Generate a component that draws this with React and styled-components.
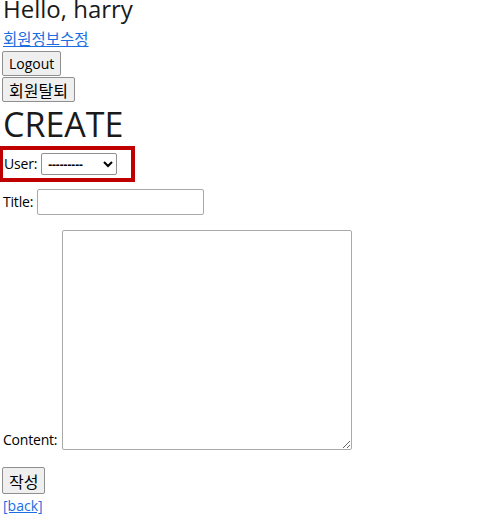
import React from 'react';
import styled, { createGlobalStyle } from 'styled-components';

const GlobalStyle = createGlobalStyle`
  html, body {
    margin: 0;
    padding: 0;
    background: #ffffff;
  }
  body {
    font-family: "Open Sans", "Noto Sans CJK KR", sans-serif;
    color: #000000;
    font-size: 14px;
  }
`;

const Page = styled.div`
  display: flex;
  flex-direction: column;
  align-items: flex-start;
  padding: 0 0 0 3px;
  overflow: hidden;
  height: 522px;
`;

const Greeting = styled.h2`
  margin: -7px 0 0;
  font-size: 24px;
  font-weight: 400;
  line-height: 32px;
  color: #1a1a1a;
`;

const Link = styled.a`
  color: #1a6ee0;
  text-decoration: underline;
  font-size: ${({ $size }) => $size || 14}px;
  line-height: ${({ $lh }) => $lh || 18}px;
  margin-top: ${({ $top }) => $top || 0}px;
`;

const Button = styled.button`
  font-family: "Open Sans", "Noto Sans CJK KR", sans-serif;
  font-size: ${({ $size }) => $size || 14}px;
  height: ${({ $h }) => $h || 25}px;
  padding: 0 6px;
  margin: ${({ $top }) => $top || 0}px 0 0 -1px;
  background: #efefef;
  border: 1px solid #8f8f8f;
  border-radius: 2px;
  color: #000;
`;

const Heading = styled.h1`
  margin: 1px 0 0;
  font-size: 34px;
  font-weight: 400;
  line-height: 42px;
  color: #1a1a1a;
`;

const Highlight = styled.div`
  display: flex;
  align-items: center;
  gap: 4px;
  margin: 1px 0 0 -4px;
  padding: 0 14px 0 1px;
  height: 28px;
  border: 4px solid #c00000;
`;

const Row = styled.div`
  display: flex;
  align-items: ${({ $end }) => ($end ? 'flex-end' : 'center')};
  gap: ${({ $gap }) => $gap || 4}px;
  margin-top: ${({ $top }) => $top || 0}px;
`;

const Label = styled.label`
  font-size: 14px;
  line-height: 16px;
  letter-spacing: -0.2px;
  margin-bottom: ${({ $bottom }) => $bottom || 0}px;
`;

const Select = styled.select`
  font-family: "Open Sans", sans-serif;
  font-size: 12px;
  font-weight: 700;
  height: 22px;
  width: 76px;
  border: 1px solid #8f8f8f;
  border-radius: 2px;
  background: #fff;
  color: #000;
  padding: 0 2px;
`;

const Input = styled.input`
  width: 167px;
  height: 26px;
  box-sizing: border-box;
  border: 1px solid #a9a9a9;
  border-radius: 2px;
  padding: 1px 2px;
`;

const TextArea = styled.textarea`
  width: 290px;
  height: 220px;
  box-sizing: border-box;
  border: 1px solid #a9a9a9;
  border-radius: 2px;
  display: block;
`;

export default function App() {
  return (
    <>
      <GlobalStyle />
      <Page>
        <Greeting>Hello, harry</Greeting>
        <Link href="#" $top={5} $size={15.5}>회원정보수정</Link>
        <Button $top={3}>Logout</Button>
        <Button $top={1} $size={16}>회원탈퇴</Button>
        <Heading>CREATE</Heading>
        <Highlight>
          <Label>User:</Label>
          <Select defaultValue="">
            <option value="">---------</option>
          </Select>
        </Highlight>
        <Row $top={7}>
          <Label>Title:</Label>
          <Input type="text" />
        </Row>
        <Row $top={15} $gap={5} $end>
          <Label $bottom={2}>Content:</Label>
          <TextArea />
        </Row>
        <Button $top={17} $h={27} $size={16}>작성</Button>
        <Link href="#" $top={4} $lh={16}>[back]</Link>
      </Page>
    </>
  );
}
